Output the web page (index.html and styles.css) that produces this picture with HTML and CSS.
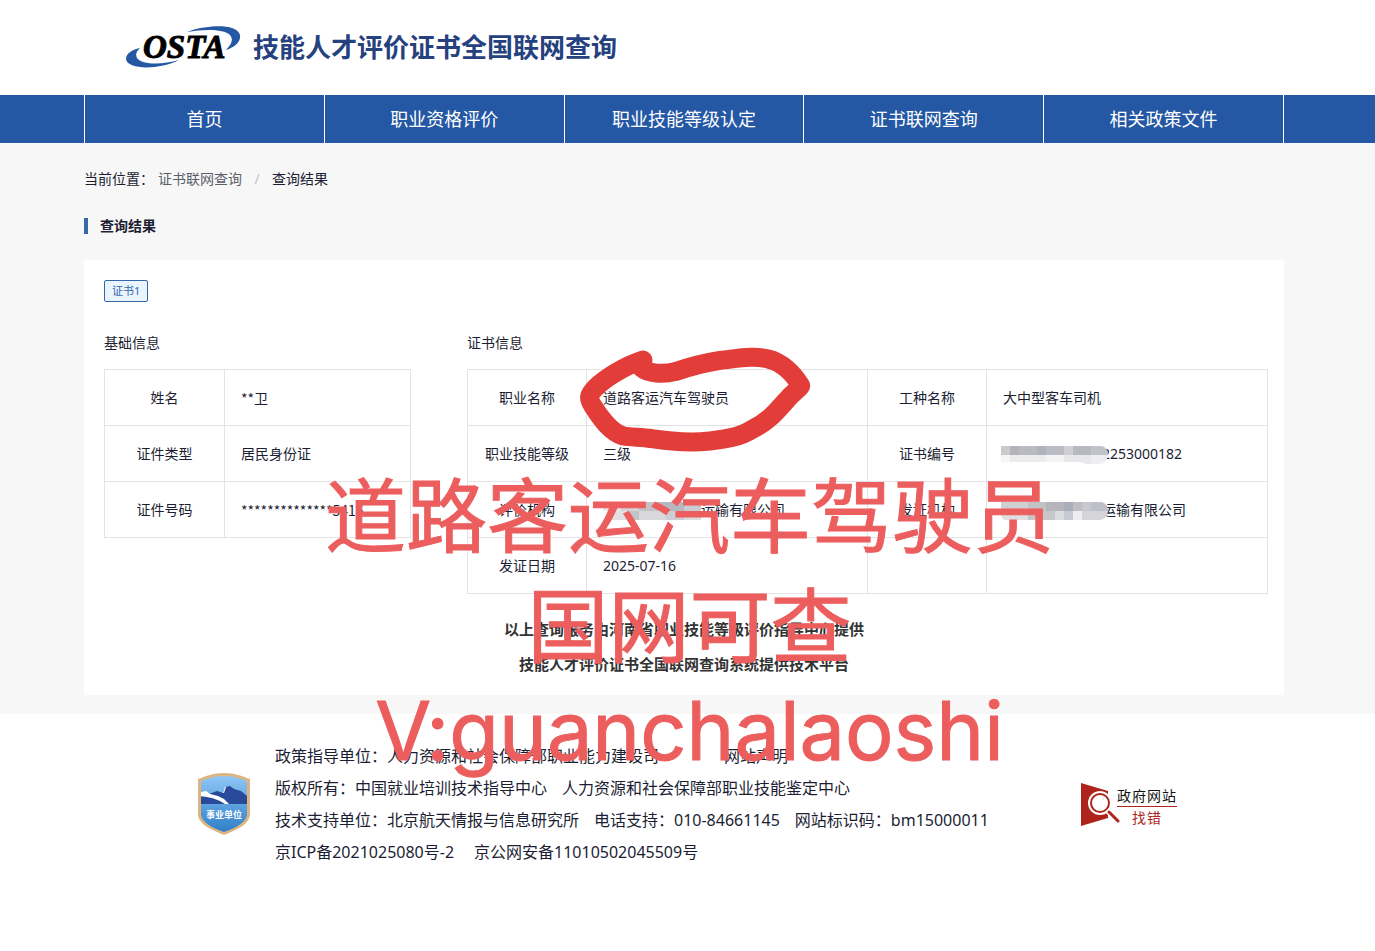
FILE: index.html
```html
<!DOCTYPE html>
<html lang="zh-CN">
<head>
  <meta charset="utf-8">
  <title>技能人才评价证书全国联网查询</title>
  <link rel="stylesheet" href="styles.css">
</head>
<body>
  <header class="header">
    <div class="container brand">
      <svg class="logo" viewBox="0 0 116 44" width="116" height="44" role="img" aria-label="OSTA">
        <path fill="#2457a4" d="M62 7C80 0 112 -2 115 10C116 17 110 22 101 25C106 20 109 15 105 10C99 4 79 4 62 7Z"/>
        <path fill="#2457a4" d="M15 23C6 25 1 29 1 34C2 45 35 45 54 35C37 40 17 40 12 33C10 29 12 26 15 23Z"/>
        <text class="logo-text" x="18" y="33">OSTA</text>
      </svg>
      <h1>技能人才评价证书全国联网查询</h1>
    </div>
  </header>

  <nav class="nav">
    <div class="container nav-list">
      <a href="#">首页</a>
      <a href="#">职业资格评价</a>
      <a href="#">职业技能等级认定</a>
      <a href="#">证书联网查询</a>
      <a href="#">相关政策文件</a>
    </div>
  </nav>

  <main class="main">
    <div class="container">
      <div class="breadcrumb">
        <span>当前位置：</span>
        <a href="#">证书联网查询</a>
        <span class="sep">/</span>
        <span>查询结果</span>
      </div>
      <h2 class="page-title">查询结果</h2>

      <div class="card">
        <span class="tag">证书1</span>
        <div class="tables">
          <section class="basic">
            <h3>基础信息</h3>
            <table>
              <tr><th>姓名</th><td class="masked">**卫</td></tr>
              <tr><th>证件类型</th><td>居民身份证</td></tr>
              <tr><th>证件号码</th><td class="masked">**************5416</td></tr>
            </table>
          </section>
          <section class="cert">
            <h3>证书信息</h3>
            <table>
              <tr>
                <th>职业名称</th>
                <td class="marked">道路客运汽车驾驶员
                  <svg class="scribble" viewBox="0 0 750 390" width="250" height="130">
                    <path d="M219 75C165 92 105 130 78 157C55 180 54 190 68 212C92 250 122 292 160 303C185 308 215 305 245 311C310 321 370 323 420 318C470 312 510 306 545 284C600 258 625 222 660 184C680 165 692 156 692 152C670 115 635 82 595 72C550 60 500 71 450 76C400 84 350 98 315 110C280 119 235 116 216 100Z"/>
                  </svg>
                </td>
                <th>工种名称</th>
                <td>大中型客车司机</td>
              </tr>
              <tr>
                <th>职业技能等级</th>
                <td>三级</td>
                <th>证书编号</th>
                <td><svg class="mosaic wide" viewBox="0 0 107 18" width="107" height="18">
                    <path fill="#cbcace" d="M0 0h9v9H0z"/><path fill="#b4b2bb" d="M9 0h9v9H9z"/><path fill="#babac2" d="M18 0h18v9H18z"/>
                    <path fill="#b2b2be" d="M36 0h9v9h-9z"/><path fill="#bbbbc3" d="M45 0h18v9H45z"/><path fill="#cfcfd5" d="M63 0h9v9h-9z"/>
                    <path fill="#b8b8c0" d="M72 0h18v9H72z"/><path fill="#c2c3ca" d="M90 0h11q6 2 6 9H90z"/>
                    <path fill="#f5f5f6" d="M0 9h9v7H0z"/><path fill="#ececee" d="M9 9h36v7H9z"/><path fill="#f4f4f5" d="M45 9h18v7H45z"/>
                    <path fill="#e8e8eb" d="M63 9h27v9h-5l-5-2H63z"/><path fill="#edeef2" d="M90 9h17q-1 9-9 9h-8z"/>
                  </svg>2253000182</td>
              </tr>
              <tr>
                <th>评价机构</th>
                <td><svg class="mosaic" viewBox="0 0 98 18" width="98" height="18">
                    <path fill="#e9e9eb" d="M0 0h18v9H0z"/><path fill="#d5d5d9" d="M18 0h18v9H18z"/><path fill="#c2c2c7" d="M36 0h18v9H36z"/>
                    <path fill="#b7b7bf" d="M54 0h27v9H54z"/><path fill="#cacad1" d="M81 0h17v9H81z"/>
                    <path fill="#e0e0e4" d="M8 9h19v9H8z"/><path fill="#c4c4c8" d="M27 9h9v9h-9z"/><path fill="#d8d8dc" d="M36 9h27v9H36z"/>
                    <path fill="#cdcdd3" d="M63 9h18v9H63z"/><path fill="#dddde1" d="M81 9h17v9H81z"/>
                  </svg>运输有限公司</td>
                <th>发证机构</th>
                <td><svg class="mosaic wide" viewBox="0 0 107 18" width="107" height="18">
                    <path fill="#d0d0d3" d="M0 0h27v9H0z"/><path fill="#c2c2c5" d="M27 0h18v9H27z"/><path fill="#b6b4bc" d="M45 0h18v9H45z"/>
                    <path fill="#abafba" d="M63 0h9v9h-9z"/><path fill="#bfbcc2" d="M72 0h9v9h-9z"/><path fill="#c8c9d0" d="M81 0h9v9h-9z"/><path fill="#bdc0c8" d="M90 0h11q6 2 6 9H90z"/>
                    <path fill="#dfdfe3" d="M0 9h27v9H3q-3-2-3-9z"/><path fill="#c7c7cb" d="M27 9h27v9H27z"/><path fill="#dadce0" d="M54 9h9v9h-9z"/>
                    <path fill="#c6c9d3" d="M63 9h9v9h-9z"/><path fill="#eeeef0" d="M72 9h9v9h-9z"/><path fill="#d4d4d9" d="M81 9h26q-1 9-9 9H81z"/>
                  </svg>运输有限公司</td>
              </tr>
              <tr>
                <th>发证日期</th>
                <td>2025-07-16</td>
                <th></th>
                <td></td>
              </tr>
            </table>
          </section>
        </div>
        <div class="provider">
          <p>以上查询服务由河南省职业技能等级评价指导中心提供</p>
          <p>技能人才评价证书全国联网查询系统提供技术平台</p>
        </div>
      </div>
    </div>
  </main>

  <footer class="footer">
    <div class="container footer-inner">
      <svg class="shield" viewBox="0 0 52 62" width="52" height="62">
        <defs>
          <linearGradient id="sky" x1="0" y1="0" x2="0" y2="1">
            <stop offset="0" stop-color="#8fc6f5"/>
            <stop offset="1" stop-color="#2f7fc8"/>
          </linearGradient>
        </defs>
        <path fill="#dcb580" d="M26 0C36 0 44 3 52 6V42C51 52 36 58 26 62C16 58 1 52 0 42V6C8 3 16 0 26 0Z"/>
        <path fill="url(#sky)" d="M26 3C35 3 42 5 49 8V42C48 50 35 56 26 59C17 56 4 50 3 42V8C10 5 17 3 26 3Z"/>
        <path fill="#29499a" d="M3 24L19 18L25 20L28 14L32 13L36 16L43 18L49 23V31H3Z"/>
        <path fill="#fff" d="M3 19L8 18L12 21L20 23L26 26L31 31H27L22 28L14 25L3 23ZM28 14L26 20L25 20L27 14Z"/>
        <text class="shield-text" x="26" y="45">事业单位</text>
      </svg>
      <div class="footer-info">
        <p class="spread"><span>政策指导单位：人力资源和社会保障部职业能力建设司</span><a href="#">网站声明</a></p>
        <p><span>版权所有：中国就业培训技术指导中心</span><span>人力资源和社会保障部职业技能鉴定中心</span></p>
        <p><span>技术支持单位：北京航天情报与信息研究所</span><span>电话支持：010-84661145</span><span>网站标识码：bm15000011</span></p>
        <p class="records"><a href="#">京ICP备2021025080号-2</a><a href="#">京公网安备11010502045509号</a></p>
      </div>
      <a class="report" href="#">
        <svg viewBox="0 0 39 43" width="39" height="43">
          <path fill="#ae241c" d="M0 0L27 8V35L0 43Z"/>
          <circle cx="19" cy="20" r="12" fill="#fff"/>
          <circle cx="19" cy="20" r="9" fill="#fff" stroke="#ae241c" stroke-width="2"/>
          <path d="M26 27L38 39" stroke="#fff" stroke-width="6"/>
          <path d="M28 29L37 38" stroke="#ae241c" stroke-width="3" stroke-linecap="round"/>
        </svg>
        <span class="report-text"><span>政府网站</span><span class="red">找错</span></span>
      </a>
    </div>
  </footer>

  <div class="watermark">
    <p>道路客运汽车驾驶员</p>
    <p>国网可查</p>
    <p class="contact">V:guanchalaoshi</p>
  </div>
</body>
</html>
```
FILE: styles.css
```css
* {
  box-sizing: border-box;
}

body {
  position: relative;
  margin: 0;
  background: #fff;
  color: #1c1e33;
  font-family: "Noto Sans", "Noto Sans CJK SC", sans-serif;
  font-size: 14px;
  line-height: 22px;
  overflow-x: hidden;
}

h1, h2, h3, p {
  margin: 0;
}

a {
  color: inherit;
  text-decoration: none;
}

.header, .nav, .main, .footer {
  padding-right: 7px;
}

.container {
  max-width: 1200px;
  margin: 0 auto;
}

.brand {
  display: flex;
  align-items: center;
  gap: 12px;
  height: 95px;
  padding-left: 41px;
  padding-bottom: 2px;
}

.brand h1 {
  color: #25417e;
  font-size: 26px;
  line-height: 36px;
}

.logo-text {
  font-family: "Liberation Serif", serif;
  font-size: 33px;
  font-weight: bold;
  font-style: italic;
  stroke: #000;
  stroke-width: 1px;
}

.nav {
  background: #2457a4;
}

.nav-list {
  display: flex;
  border-right: 1px solid #fff;
}

.nav a {
  flex: 1;
  border-left: 1px solid #fff;
  color: #fff;
  font-size: 18px;
  line-height: 48px;
  text-align: center;
}

.main {
  background: #f7f7f7;
  padding-top: 25px;
  padding-bottom: 19px;
}

.breadcrumb {
  display: flex;
}

.breadcrumb a {
  margin-left: 4px;
  color: #5c5f69;
}

.breadcrumb .sep {
  width: 30px;
  color: #c0c4cc;
  text-align: center;
}

.page-title {
  display: flex;
  align-items: center;
  gap: 12px;
  margin: 25px 0 23px;
  font-size: 14px;
}

.page-title::before {
  content: "";
  width: 4px;
  height: 16px;
  background: #3568a8;
}

.card {
  background: #fff;
  padding: 20px 16px 13px 20px;
}

.tag {
  display: block;
  width: fit-content;
  padding: 0 7px;
  border: 1px solid #3568a8;
  border-radius: 2px;
  background: #eaf5ff;
  color: #3568a8;
  font-size: 11px;
  line-height: 20px;
}

.tables {
  display: flex;
  align-items: flex-start;
  gap: 56px;
  margin-top: 30px;
}

.basic {
  width: 307px;
}

.cert {
  flex: 1;
}

h3 {
  margin-bottom: 15px;
  font-size: 14px;
  font-weight: normal;
}

table {
  width: 100%;
  border-collapse: collapse;
  table-layout: fixed;
}

th, td {
  height: 56px;
  padding: 0 16px;
  border: 1px solid #e4e4e8;
  text-align: left;
  white-space: nowrap;
}

th {
  width: 120px;
  padding: 0;
  font-weight: normal;
  text-align: center;
}

.cert th {
  width: 119px;
}

.masked {
  font-family: "Noto Sans CJK SC", sans-serif;
}

.marked {
  position: relative;
}

/* red pen ring round the job title */
.scribble {
  position: absolute;
  left: -17px;
  top: -35px;
  z-index: 1;
  fill: none;
  stroke: #e23d39;
  stroke-width: 57;
  stroke-linecap: round;
  stroke-linejoin: round;
}

.mosaic {
  position: relative;
  vertical-align: middle;
}

.mosaic.wide {
  margin: 0 -6px 0 -2px;
}

.provider {
  margin-top: 18px;
  padding-right: 4px;
  color: #333;
  font-size: 15px;
  font-weight: bold;
  line-height: 35px;
  text-align: center;
}

.footer-inner {
  display: flex;
  align-items: center;
  padding: 26px 107px 83px 114px;
}

.shield-text {
  fill: #fff;
  font-size: 9px;
  font-weight: bold;
  text-anchor: middle;
}

.footer-info {
  flex: 1;
  margin-left: 25px;
  font-size: 16px;
  line-height: 32px;
  white-space: nowrap;
}

.footer-info p {
  display: flex;
  gap: 15px;
}

.footer-info .spread {
  gap: 65px;
}

.footer-info .records {
  gap: 20px;
}

.report {
  display: flex;
  align-items: center;
  color: #111;
}

.report-text {
  display: flex;
  flex-direction: column;
  margin-left: -3px;
  padding-top: 4px;
  font-size: 14px;
  letter-spacing: 1px;
  line-height: 21px;
  text-align: center;
}

.report-text .red {
  border-top: 1px solid #ae241c;
  color: #ae241c;
}

.watermark {
  position: absolute;
  left: 0;
  right: 0;
  top: 456px;
  padding-left: 4px;
  z-index: 2;
  color: #ec5e5e;
  font-family: "Noto Sans CJK SC", sans-serif;
  font-size: 81px;
  line-height: 110px;
  text-align: center;
  white-space: nowrap;
  pointer-events: none;
  -webkit-text-stroke: 1px #ec5e5e;
}

.watermark .contact {
  font-family: Inter, sans-serif;
}
```
